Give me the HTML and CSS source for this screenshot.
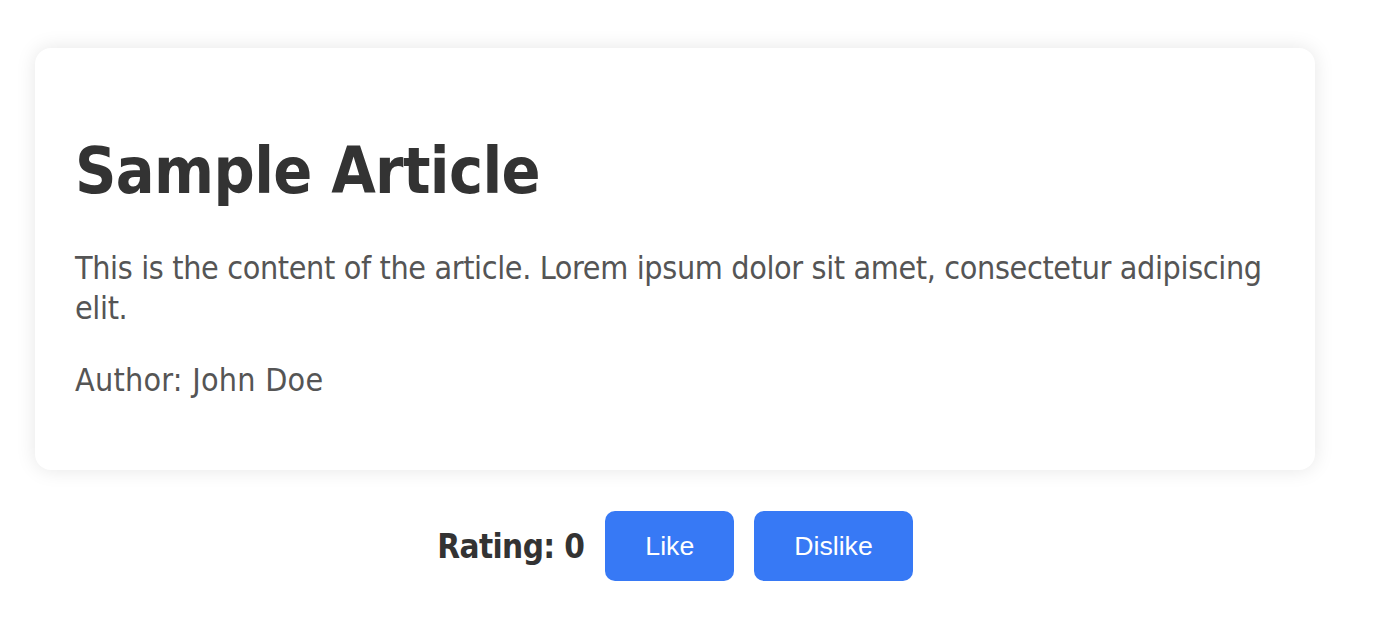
FILE: index.html
```html
<!DOCTYPE html>
<html>
<head>
<meta charset="utf-8">
<link rel="stylesheet" href="styles.css">
</head>
<body>
<div class="page">
  <article class="card">
    <h1 class="title">Sample Article</h1>
    <p class="text">This is the content of the article. Lorem ipsum dolor sit amet, consectetur adipiscing elit.</p>
    <p class="text author">Author: John Doe</p>
  </article>
  <div class="rating-row">
    <span class="rating">Rating: 0</span>
    <button class="btn">Like</button>
    <button class="btn">Dislike</button>
  </div>
</div>
</body>
</html>
```
FILE: styles.css
```css
html, body {
  margin: 0;
  padding: 0;
  background: #ffffff;
}
body {
  font-family: "DejaVu Sans Condensed", "DejaVu Sans", sans-serif;
}
.page {
  width: 1350px;
  padding-top: 48px;
  display: flex;
  flex-direction: column;
  align-items: center;
}
.card {
  width: 1280px;
  box-sizing: border-box;
  padding: 40px;
  background: #fff;
  border-radius: 16px;
  box-shadow: 0 0 20px rgba(0, 0, 0, 0.1);
}
.title {
  margin: 45px 0 38px;
  font-size: 64px;
  line-height: 77px;
  font-weight: bold;
  letter-spacing: -0.6px;
  color: #333;
}
.text {
  margin: 0 0 32px;
  font-size: 32px;
  line-height: 40px;
  letter-spacing: -0.36px;
  color: #555;
}
.author {
  margin-bottom: 30px;
  letter-spacing: 0.25px;
}
.rating-row {
  margin-top: 41px;
  display: flex;
  align-items: center;
  gap: 20px;
}
.rating {
  font-size: 33px;
  font-weight: bold;
  letter-spacing: -0.6px;
  color: #333;
  margin-right: 1px;
}
.btn {
  font-family: "Liberation Sans", Arial, sans-serif;
  font-size: 26.67px;
  line-height: 30px;
  padding: 20px 40px;
  border: none;
  border-radius: 10px;
  background: #3779f5;
  color: #fff;
}
```
